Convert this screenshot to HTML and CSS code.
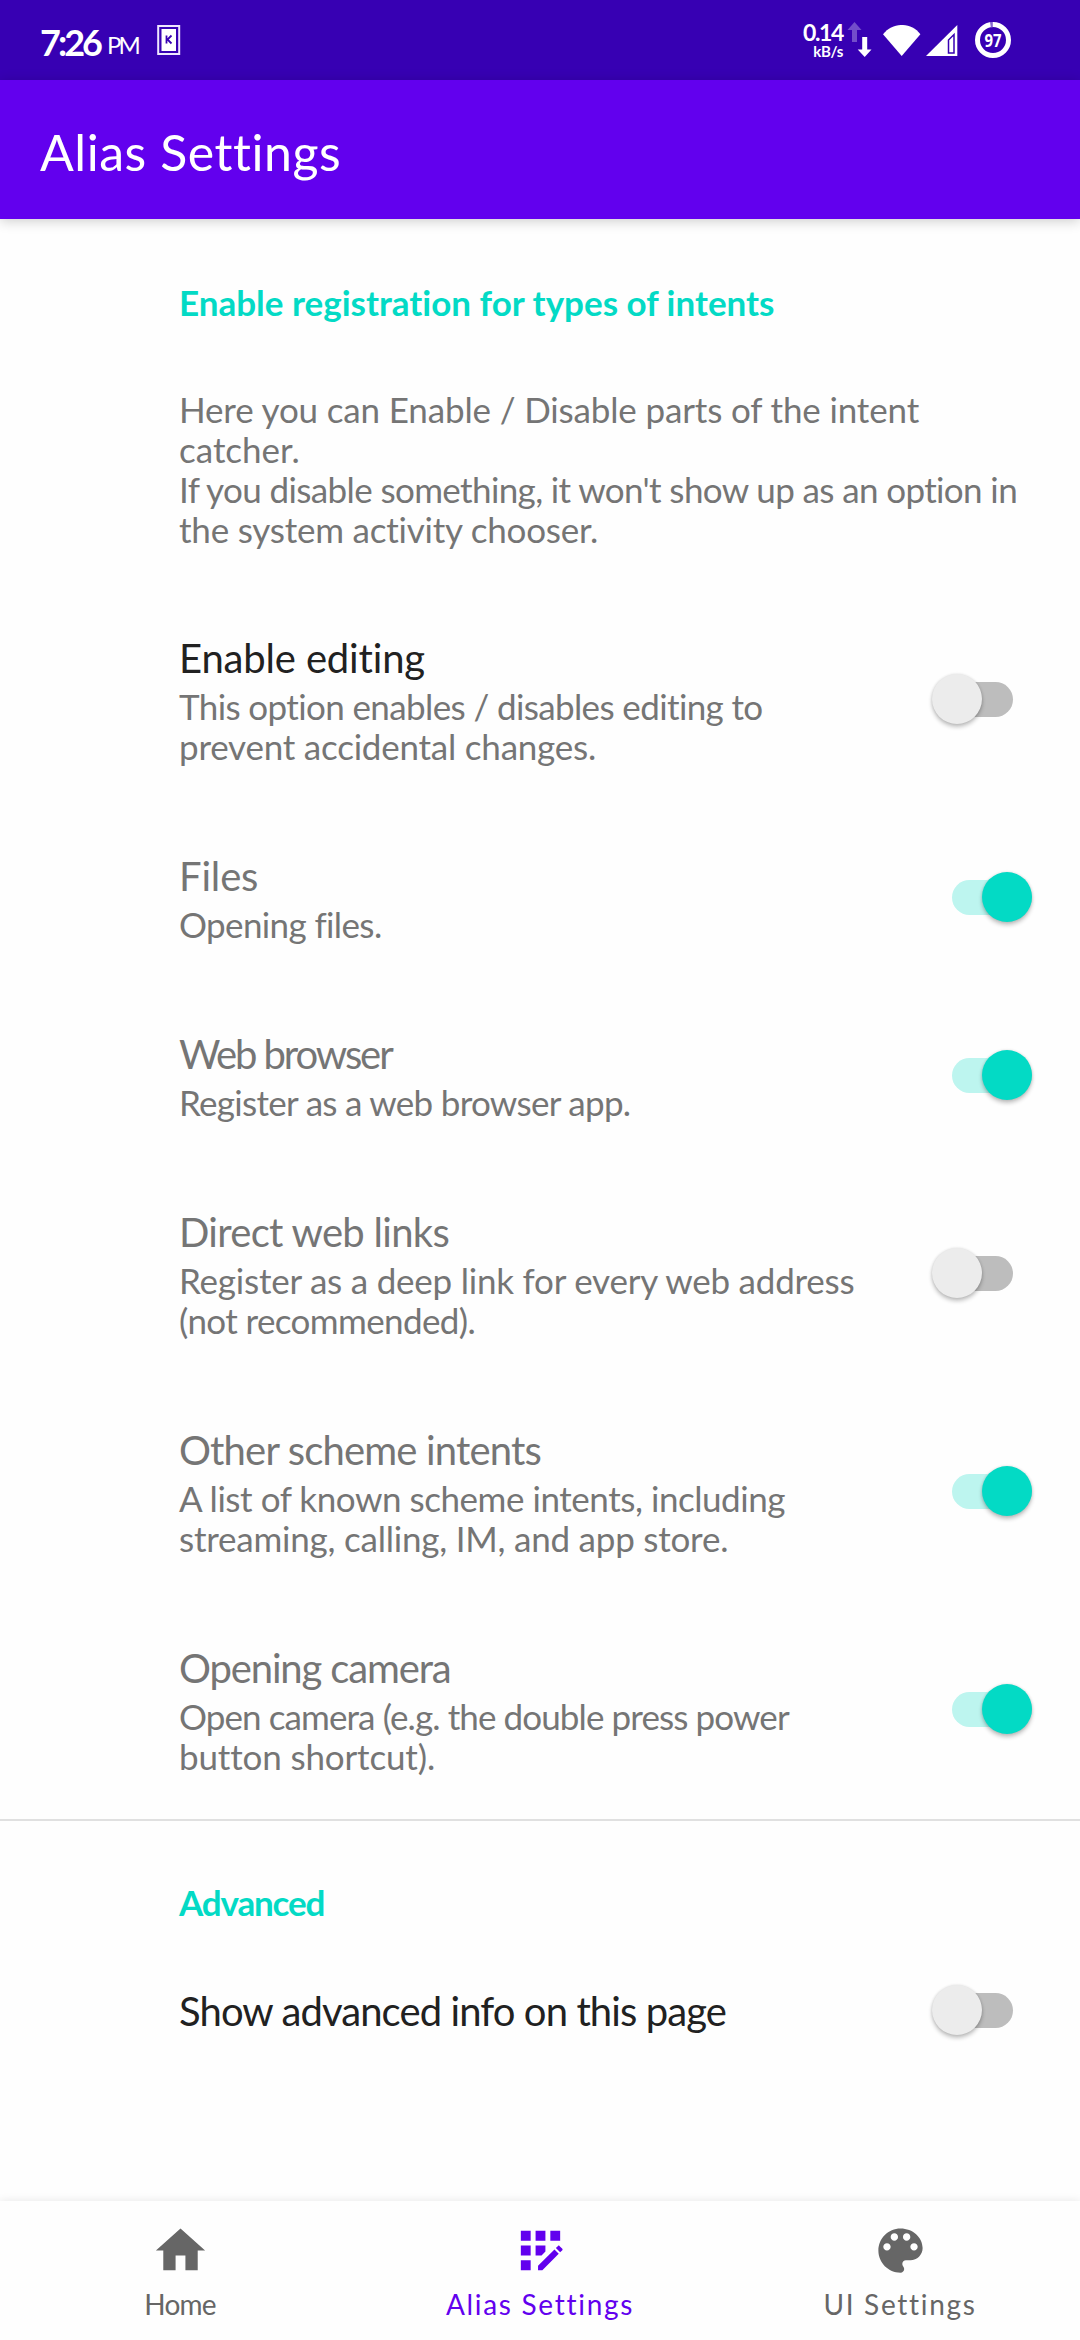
FILE: index.html
```html
<!DOCTYPE html>
<html lang="en">
<head>
<meta charset="utf-8">
<title>Alias Settings</title>
<link rel="stylesheet" href="styles.css">
</head>
<body>
<div class="statusbar">
  <span class="time">7:26</span><span class="ampm">PM</span>
  <svg class="card-icon" width="24" height="30" viewBox="0 0 24 30"><rect x="1.2" y="1" width="21" height="28" fill="none" stroke="#efe6ff" stroke-width="2"/><rect x="4.500" y="4" width="14.500" height="22" fill="#fff"/><path d="M9.500 10.500v8M14.500 10.500l-4 4 4 4" fill="none" stroke="#3700b3" stroke-width="1.800"/></svg>
  <span class="spacer"></span>
  <span class="speed"><span class="rate">0.14</span><span class="unit">kB/s</span></span>
  <svg class="arrows" width="26" height="36" viewBox="0 0 26 36"><path d="M7.500 0l7 8h-4.500v12H5V8H.5z" fill="#fff" opacity=".3"/><path d="M15.200 15h5v12.500h4.300L17.700 35l-7-7.500h4.500z" fill="#fff"/></svg>
  <svg class="wifi" width="38" height="31" viewBox="0 0 38 31"><path d="M0 9.200C10-3.100 28-3.100 37.400 9.200L18.700 31z" fill="#fff"/></svg>
  <svg class="signal" width="32" height="31" viewBox="0 0 32 31"><path d="M31.300 0v31H0z" fill="#fff"/><path d="M28 9.500V28h-5.500V15z" fill="none" stroke="#3700b3" stroke-width="1.500"/></svg>
  <svg class="battery" width="36" height="36" viewBox="0 0 36 36"><circle cx="18" cy="18" r="15.500" fill="none" stroke="#fff" stroke-width="5"/><path d="M15 0h2.800v5.300H15.800z" fill="#8766d1"/><text x="18" y="24.500" text-anchor="middle" textLength="17" lengthAdjust="spacingAndGlyphs" class="battery-level">97</text></svg>
</div>
<header class="appbar"><h1>Alias Settings</h1></header>
<main>
  <section class="group">
    <h2>Enable registration for types of intents</h2>
    <p class="intro"><span class="tight-1">Here you can Enable / Disable parts of the intent</span><span>catcher.</span><span class="tight-5">If you disable something, it won't show up as an option in</span><span class="tight-2">the system activity chooser.</span></p>
    <div class="row active">
      <div class="label"><h3 class="tight-1">Enable editing</h3><p><span class="tight-5">This option enables / disables editing to</span><span class="tight-2">prevent accidental changes.</span></p></div>
      <div class="switch"><i></i></div>
    </div>
    <div class="row">
      <div class="label"><h3 class="tight-1">Files</h3><p><span class="tight-5">Opening files.</span></p></div>
      <div class="switch on"><i></i></div>
    </div>
    <div class="row">
      <div class="label"><h3 class="tight-20">Web browser</h3><p><span class="tight-6">Register as a web browser app.</span></p></div>
      <div class="switch on"><i></i></div>
    </div>
    <div class="row">
      <div class="label"><h3 class="tight-6">Direct web links</h3><p><span class="tight-2">Register as a deep link for every web address</span><span class="tight-5">(not recommended).</span></p></div>
      <div class="switch"><i></i></div>
    </div>
    <div class="row">
      <div class="label"><h3 class="tight-8">Other scheme intents</h3><p><span class="tight-4">A list of known scheme intents, including</span><span class="tight-2">streaming, calling, IM, and app store.</span></p></div>
      <div class="switch on"><i></i></div>
    </div>
    <div class="row">
      <div class="label"><h3 class="tight-12">Opening camera</h3><p><span class="tight-9">Open camera (e.g. the double press power</span><span class="tight-1">button shortcut).</span></p></div>
      <div class="switch on"><i></i></div>
    </div>
  </section>
  <section class="group advanced">
    <h2 class="tight-12">Advanced</h2>
    <div class="row single active">
      <div class="label"><h3 class="tight-9">Show advanced info on this page</h3></div>
      <div class="switch"><i></i></div>
    </div>
  </section>
</main>
<nav>
  <a class="home"><svg viewBox="0 0 24 24"><path d="M10 20v-6h4v6h5v-8h3L12 3 2 12h3v8z"/></svg><span>Home</span></a>
  <a class="current"><svg viewBox="0 0 24 24"><path d="M10 4h4v4h-4zM4 16h4v4H4zM4 10h4v4H4zM4 4h4v4H4zM14 12.420V10h-4v4h2.420zM20.880 11.290l-1.170-1.170c-.16-.16-.42-.16-.58 0l-.88.88L20 12.750l.88-.88c.16-.16.16-.42 0-.58zM11 18.250V20h1.750l6.670-6.670-1.750-1.750zM16 4h4v4h-4z"/></svg><span>Alias Settings</span></a>
  <a><svg viewBox="0 0 24 24"><path d="M12 3c-4.970 0-9 4.030-9 9s4.030 9 9 9c.83 0 1.500-.67 1.500-1.500 0-.39-.15-.74-.39-1.010-.23-.26-.38-.61-.38-.99 0-.83.67-1.500 1.500-1.500H16c2.760 0 5-2.240 5-5 0-4.420-4.030-8-9-8zm-5.500 9c-.83 0-1.500-.67-1.500-1.500S5.670 9 6.500 9 8 9.670 8 10.500 7.330 12 6.500 12zm3-4C8.670 8 8 7.330 8 6.500S8.670 5 9.500 5s1.500.67 1.500 1.500S10.330 8 9.500 8zm5 0c-.83 0-1.500-.67-1.500-1.500S13.670 5 14.500 5s1.500.67 1.500 1.500S15.330 8 14.500 8zm3 4c-.83 0-1.500-.67-1.500-1.500S16.670 9 17.500 9s1.500.67 1.500 1.500-.67 1.500-1.500 1.500z"/></svg><span>UI Settings</span></a>
</nav>
</body>
</html>
```
FILE: styles.css
```css
* { box-sizing: border-box; }
body {
  margin: 0;
  width: 1080px;
  height: 2340px;
  display: flex;
  flex-direction: column;
  overflow: hidden;
  background: #fefefe;
  color: #757575;
  font-family: Lato, "Liberation Sans", sans-serif;
  font-variant-ligatures: none;
  white-space: nowrap;
}
h1, h2, h3, p { margin: 0; font-weight: 400; }
svg { display: block; flex: none; }

.statusbar {
  flex: none;
  height: 80px;
  padding: 0 69px 0 40px;
  display: flex;
  align-items: center;
  background: #3700b3;
  color: #fff;
}
.time { width: 67px; font-size: 36px; font-weight: 700; line-height: 44px; letter-spacing: -3px; padding-top: 3px; }
.ampm { width: 50px; font-size: 24px; line-height: 44px; letter-spacing: -3px; padding-top: 10px; }
.spacer { flex: 1; }
.speed { width: 42px; display: flex; flex-direction: column; align-items: flex-end; }
.rate { font-size: 23px; font-weight: 700; line-height: 23px; letter-spacing: -1.4px; }
.unit { font-size: 15px; font-weight: 700; line-height: 15px; letter-spacing: -.3px; }
.arrows { margin: 0 10px 0 4px; }
.wifi { margin-right: 5px; }
.signal { margin-right: 17px; }
.battery-level { font: 700 18px "Open Sans", sans-serif; fill: #fff; }

.appbar {
  flex: none;
  height: 139px;
  padding: 42px 0 0 40px;
  background: #6200ee;
  color: #fff;
  box-shadow: 0 2px 12px rgba(0, 0, 0, .2);
}
h1 { font-size: 50px; line-height: 60px; letter-spacing: .55px; }

main { flex: 1; }
.group { padding-top: 63px; }
h2 {
  padding-left: 179px;
  font-size: 35px;
  font-weight: 700;
  line-height: 40px;
  color: #03dac5;
}
.intro { padding: 67px 0 41px 179px; }
p { font-size: 35px; line-height: 40px; }
p span { display: block; }
h3 { font-size: 40px; line-height: 47px; }
.active h3 { color: #212121; }
.row {
  display: flex;
  align-items: center;
  justify-content: space-between;
  padding: 45px 48px 42px 179px;
}
.label p { margin-top: 4px; }
.switch {
  flex: none;
  width: 80px;
  height: 35px;
  margin: -3px 19px 0 0;
  display: flex;
  align-items: center;
  border-radius: 18px;
  background: #bdbdbd;
}
.switch i {
  flex: none;
  width: 50px;
  height: 50px;
  margin-left: -1px;
  border-radius: 50%;
  background: #ececec;
  box-shadow: 0 3px 4px rgba(0, 0, 0, .24), 0 0 3px rgba(0, 0, 0, .12);
}
.switch.on { margin-right: 0; background: #bdf5ef; justify-content: flex-end; }
.switch.on i { background: #03dac5; }
.advanced { margin-top: 1px; border-top: 2px solid #e0e0e0; padding-top: 61px; }
.single { margin-top: 21px; }

/* letter fitting for individual lines */
.tight-1 { letter-spacing: -.15px; }
.tight-2 { letter-spacing: -.22px; }
.tight-4 { letter-spacing: -.45px; }
.tight-5 { letter-spacing: -.62px; }
.tight-6 { letter-spacing: -.7px; }
.tight-8 { letter-spacing: -.83px; }
.tight-9 { letter-spacing: -.9px; }
.tight-12 { letter-spacing: -1.15px; }
.tight-20 { letter-spacing: -2.1px; }

nav {
  flex: none;
  height: 139px;
  display: flex;
  box-shadow: 0 -1px 8px rgba(0, 0, 0, .08);
  background: #fefefe;
}
nav a {
  flex: 1;
  padding-top: 20px;
  display: flex;
  flex-direction: column;
  align-items: center;
  gap: 6px;
  color: #666;
  font-size: 28px;
  line-height: 36px;
  letter-spacing: 1.7px;
}
nav svg { width: 59px; height: 59px; fill: currentColor; }
.home { letter-spacing: -.8px; }
.current { color: #6200ee; }
```
